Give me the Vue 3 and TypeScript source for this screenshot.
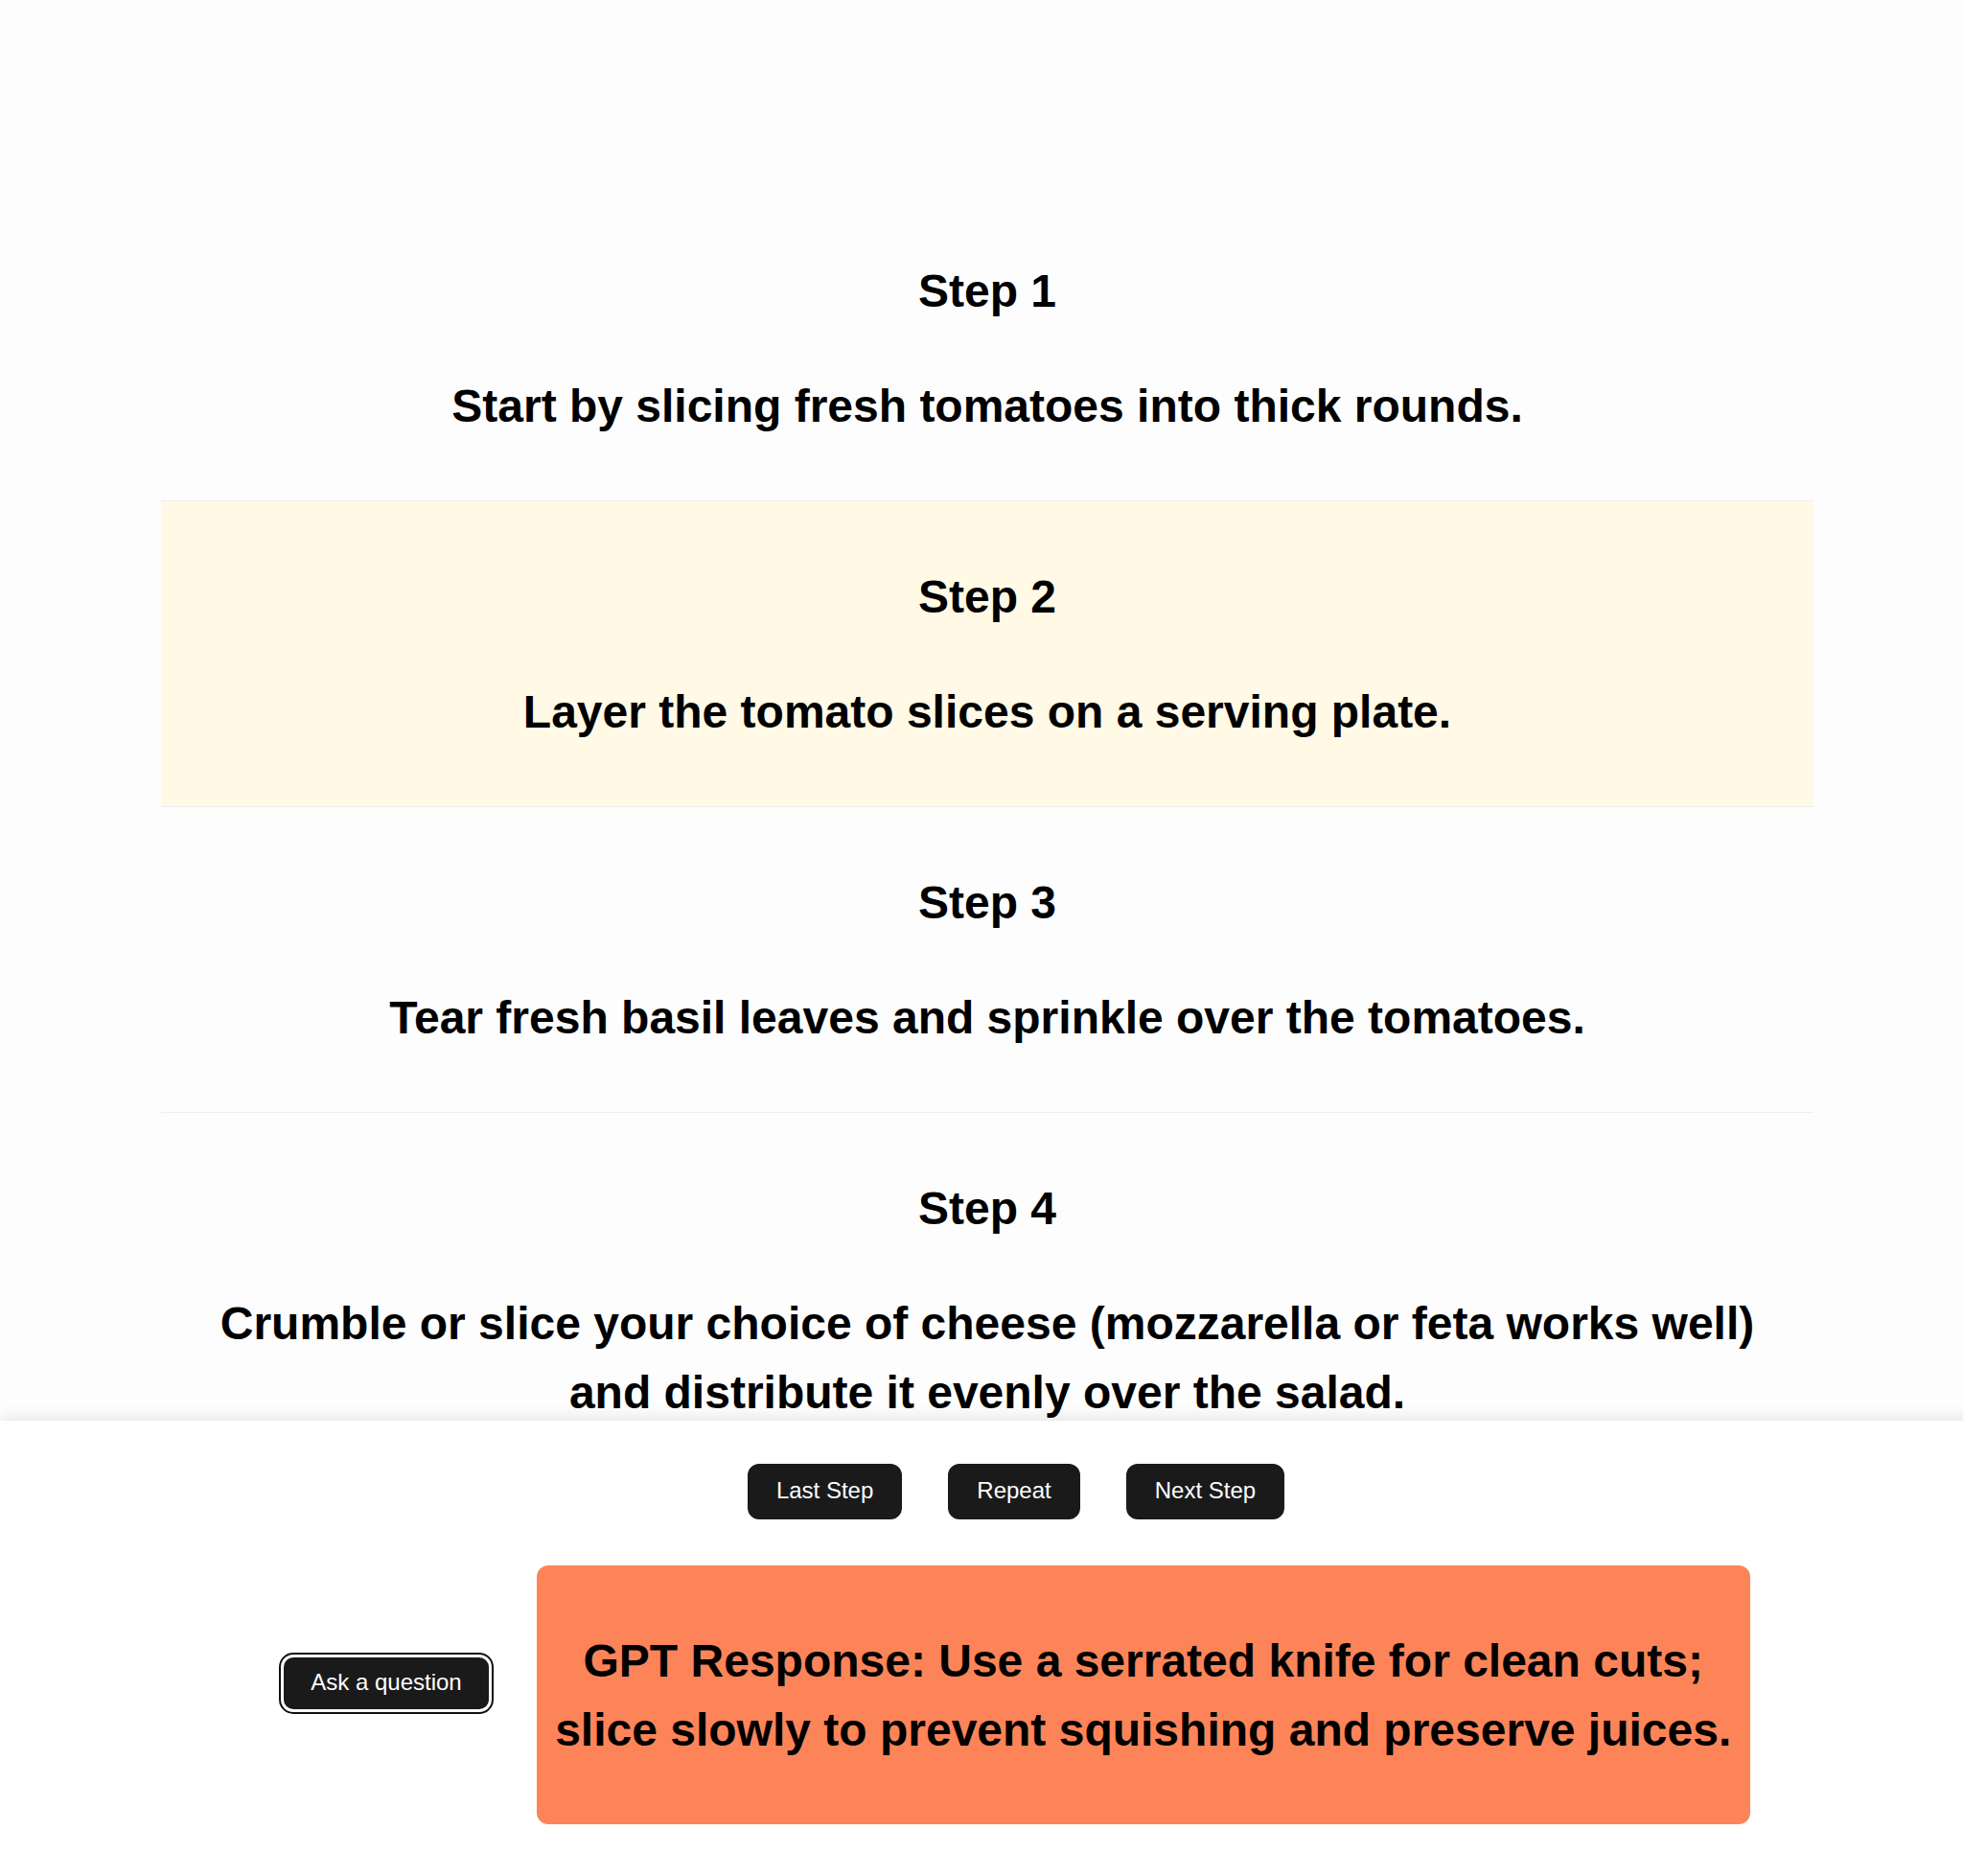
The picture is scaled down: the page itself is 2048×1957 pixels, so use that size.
<script setup lang="ts">
import { ref } from 'vue'

const steps: string[] = [
  'Start by slicing fresh tomatoes into thick rounds.',
  'Layer the tomato slices on a serving plate.',
  'Tear fresh basil leaves and sprinkle over the tomatoes.',
  'Crumble or slice your choice of cheese (mozzarella or feta works well) and distribute it evenly over the salad.',
]

const current = ref(1)
const response = ref('Use a serrated knife for clean cuts; slice slowly to prevent squishing and preserve juices.')

function move(by: number): void {
  current.value = Math.min(steps.length - 1, Math.max(0, current.value + by))
}
</script>

<template>
  <div class="page">
    <main class="steps">
      <section v-for="(text, i) in steps" :key="i" class="step" :class="{ active: i === current }">
        <h2>Step {{ i + 1 }}</h2>
        <h2>{{ text }}</h2>
      </section>
    </main>
    <footer class="controls">
      <div class="row nav">
        <button type="button" @click="move(-1)">Last Step</button>
        <button type="button">Repeat</button>
        <button type="button" @click="move(1)">Next Step</button>
      </div>
      <div class="row">
        <button type="button" class="ask">Ask a question</button>
        <div class="response">
          <h2>GPT Response: {{ response }}</h2>
        </div>
      </div>
    </footer>
  </div>
</template>

<style>
body {
  margin: 0;
  background: #fdfdfd;
}
</style>

<style scoped>
.page {
  display: flex;
  flex-direction: column;
  height: 100vh;
  overflow: hidden;
  font-family: "Liberation Sans", Arial, sans-serif;
  color: #000;
}

.steps {
  flex: 1;
  min-height: 0;
  overflow: hidden;
  padding: 204px 156px 0 168px;
}

.step {
  display: flex;
  flex-direction: column;
  gap: 48px;
  padding: 64px 15px 62px;
  border-bottom: 1px solid #eee;
  text-align: center;
}

.step.active {
  background: #fff9e6;
}

h2 {
  margin: 0;
  font-size: 48px;
  line-height: 72px;
  font-weight: 700;
}

/* The bar runs past the right edge of the window. */
.controls {
  position: relative;
  display: flex;
  flex-direction: column;
  gap: 48px;
  box-sizing: border-box;
  width: calc(100% + 72px);
  padding: 45px 30px 54px;
  background: #fff;
  box-shadow: 0 -3px 15px rgba(0, 0, 0, 0.1);
}

.row {
  display: flex;
  justify-content: center;
  align-items: center;
  gap: 48px;
}

button {
  box-sizing: border-box;
  height: 58px;
  padding: 0 28px 2px;
  border: 2px solid #1a1a1a;
  border-radius: 12px;
  background: #1a1a1a;
  color: #fff;
  font-family: inherit;
  font-size: 24px;
  line-height: 36px;
}

/* Focus ring: a light gap inside a thin dark line. */
.ask {
  margin-bottom: 24px;
  border-color: #fff;
  box-shadow: 0 0 0 1px #fff, 0 0 0 3px #101010;
}

.response {
  box-sizing: border-box;
  max-width: 1266px;
  padding: 64px 15px 62px;
  border-radius: 12px;
  background: #fd8458;
  text-align: center;
}
</style>
